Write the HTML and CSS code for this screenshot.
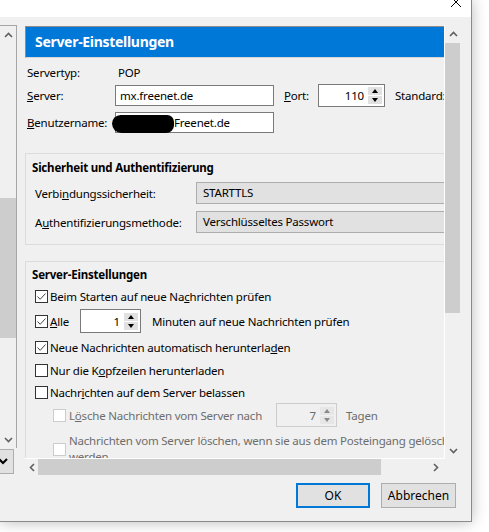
FILE: index.html
```html
<!DOCTYPE html>
<html lang="de">
<head>
    <meta charset="UTF-8">
    <meta name="viewport" content="width=device-width, initial-scale=1.0">
    <title>Konten-Einstellungen</title>
    <link rel="stylesheet" href="styles.css">
</head>
<body>
    <div class="window">
        <!-- Titelleiste, nur der untere Rand ist sichtbar -->
        <div class="titlebar">
            <svg class="close" width="12" height="8" viewBox="0 0 12 8">
                <path d="M1 -3 L11 7 M11 -3 L1 7" stroke="#000" stroke-width="1" fill="none"/>
            </svg>
        </div>

        <div class="dialog">
            <div class="main">
                <!-- Kontenliste links (abgeschnitten) -->
                <div class="side">
                    <div class="tree">
                        <div class="sb-btn"><svg width="9" height="6" viewBox="0 0 9 6"><polyline points="1,5 4.5,1.5 8,5" class="chev"/></svg></div>
                        <div class="tree-thumb"></div>
                        <div class="sb-fill"></div>
                        <div class="sb-btn"><svg width="9" height="6" viewBox="0 0 9 6"><polyline points="1,1 4.5,4.5 8,1" class="chev"/></svg></div>
                    </div>
                    <div class="side-btn">
                        <svg width="14" height="23" viewBox="0 0 14 23"><polyline points="-1,9 3,13 7,9" fill="none" stroke="#000" stroke-width="2"/></svg>
                    </div>
                </div>

                <!-- Einstellungsseite mit Bildlaufleisten -->
                <div class="pane">
                    <div class="viewport">
                        <div class="content">
                            <div class="page-title">Server-Einstellungen</div>

                            <div class="form-row row-type">
                                <span class="lbl">Servertyp:</span>
                                <span class="val">POP</span>
                            </div>
                            <div class="form-row row-server">
                                <span class="lbl"><u>S</u>erver:</span>
                                <div class="field">mx.freenet.de</div>
                                <span class="port-lbl"><u>P</u>ort:</span>
                                <div class="spin spin-port">
                                    <span class="spin-val">110</span>
                                    <div class="spin-btns">
                                        <div class="spin-up"></div>
                                        <div class="spin-down"></div>
                                    </div>
                                </div>
                                <span class="std">Standard: 110</span>
                            </div>
                            <div class="form-row row-user">
                                <span class="lbl"><u>B</u>enutzername:</span>
                                <div class="field"><span class="blob"></span>Freenet.de</div>
                            </div>

                            <div class="group group-security">
                                <div class="group-title">Sicherheit und Authentifizierung</div>
                                <div class="group-row">
                                    <span class="lbl2">Verbi<u>n</u>dungssicherheit:</span>
                                    <div class="combo">STARTTLS</div>
                                </div>
                                <div class="group-row second">
                                    <span class="lbl2">A<u>u</u>thentifizierungsmethode:</span>
                                    <div class="combo">Verschlüsseltes Passwort</div>
                                </div>
                            </div>

                            <div class="group group-server">
                                <div class="group-title">Server-Einstellungen</div>
                                <div class="check-row r1">
                                    <span class="cb checked"><svg width="11" height="11" viewBox="0 0 11 11"><polyline points="1.5,5.5 4.2,8.3 9.5,2.5" class="tick"/></svg></span>
                                    <span>Beim Starten auf neue Na<u>c</u>hrichten prüfen</span>
                                </div>
                                <div class="check-row r2">
                                    <span class="cb checked"><svg width="11" height="11" viewBox="0 0 11 11"><polyline points="1.5,5.5 4.2,8.3 9.5,2.5" class="tick"/></svg></span>
                                    <span class="alle"><u>A</u>lle</span>
                                    <div class="spin spin-small">
                                        <span class="spin-val">1</span>
                                        <div class="spin-btns">
                                            <div class="spin-up"></div>
                                            <div class="spin-down"></div>
                                        </div>
                                    </div>
                                    <span class="minuten">Minuten auf neue Nachrichten prüfen</span>
                                </div>
                                <div class="check-row r3">
                                    <span class="cb checked"><svg width="11" height="11" viewBox="0 0 11 11"><polyline points="1.5,5.5 4.2,8.3 9.5,2.5" class="tick"/></svg></span>
                                    <span>Neue Nachrichten automatisch herunterla<u>d</u>en</span>
                                </div>
                                <div class="check-row r4">
                                    <span class="cb"></span>
                                    <span>Nur die K<u>o</u>pfzeilen herunterladen</span>
                                </div>
                                <div class="check-row r5">
                                    <span class="cb"></span>
                                    <span>Nachr<u>i</u>chten auf dem Server belassen</span>
                                </div>
                                <div class="check-row r6 sub disabled">
                                    <span class="cb"></span>
                                    <span class="loesche">L<u>ö</u>sche Nachrichten vom Server nach</span>
                                    <div class="spin spin-small">
                                        <span class="spin-val">7</span>
                                        <div class="spin-btns">
                                            <div class="spin-up"></div>
                                            <div class="spin-down"></div>
                                        </div>
                                    </div>
                                    <span class="tagen">Tagen</span>
                                </div>
                                <div class="check-row r7 sub disabled">
                                    <span class="cb"></span>
                                    <span class="wrap">Nachrichten vom Server löschen, wenn sie aus dem Posteingang gelöscht<br>werden</span>
                                </div>
                            </div>
                        </div>
                    </div>

                    <div class="vscroll">
                        <div class="sb-btn"><svg width="9" height="6" viewBox="0 0 9 6"><polyline points="1,5 4.5,1.5 8,5" class="chev"/></svg></div>
                        <div class="v-thumb"></div>
                        <div class="sb-fill"></div>
                        <div class="sb-btn"><svg width="9" height="6" viewBox="0 0 9 6"><polyline points="1,1 4.5,4.5 8,1" class="chev"/></svg></div>
                    </div>
                    <div class="hscroll">
                        <div class="hb-btn left"><svg width="6" height="9" viewBox="0 0 6 9"><polyline points="5,1 1.5,4.5 5,8" class="chev"/></svg></div>
                        <div class="h-thumb"></div>
                        <div class="sb-fill"></div>
                        <div class="hb-btn right"><svg width="6" height="9" viewBox="0 0 6 9"><polyline points="1,1 4.5,4.5 1,8" class="chev"/></svg></div>
                    </div>
                    <div class="corner"></div>
                </div>
            </div>

            <div class="buttons">
                <button class="btn default">OK</button>
                <button class="btn">Abbrechen</button>
            </div>
        </div>
    </div>
</body>
</html>
```

FILE: styles.css
```css
/* Grundlayout */
body {
    margin: 0;
    width: 489px;
    height: 532px;
    overflow: hidden;
    background-color: #fff;
    color: #000;
    font-family: "Noto Sans", sans-serif;
    font-size: 11.5px;
    letter-spacing: -0.2px;
}

.window {
    width: 471px;
    height: 521px;
    border-right: 1px solid #8a8a8a;
    border-bottom: 1px solid #8a8a8a;
    background-color: #f0f0f0;
    box-shadow: 0 0 14px rgba(0, 0, 0, 0.28);
    display: flex;
    flex-direction: column;
}

.titlebar {
    height: 17px;
    background-color: #fff;
    display: flex;
    justify-content: flex-end;
    align-items: flex-start;
    overflow: hidden;
}

.close {
    margin-right: 9px;
}

.dialog {
    flex: 1;
    display: flex;
    flex-direction: column;
    padding: 8px 10px 0 0;
}

.main {
    display: flex;
    height: 450px;
}

/* Linke Kontenliste */
.side {
    width: 17px;
    margin-right: 8px;
    display: flex;
    flex-direction: column;
}

.tree {
    height: 423px;
    box-sizing: border-box;
    border-top: 1px solid #a6a6a6;
    border-right: 1px solid #a6a6a6;
    display: flex;
    flex-direction: column;
}

.tree-thumb {
    margin-top: 155px;
    height: 140px;
    background-color: #cdcdcd;
}

.side-btn {
    margin-top: 1px;
    width: 14px;
    height: 25px;
    box-sizing: border-box;
    background-color: #e1e1e1;
    border: 1px solid #adadad;
    border-left: none;
    overflow: hidden;
}

/* Bildlaufleisten */
.sb-btn {
    height: 17px;
    display: flex;
    align-items: center;
    justify-content: center;
    flex: none;
}

.sb-fill {
    flex: 1;
}

.chev {
    fill: none;
    stroke: #606060;
    stroke-width: 1.6;
}

.pane {
    display: grid;
    grid-template-columns: 420px 16px;
    grid-template-rows: 434px 16px;
}

.viewport {
    overflow: hidden;
    box-sizing: border-box;
    border-right: 1px solid #fff;
    border-bottom: 1px solid #fff;
}

.vscroll {
    display: flex;
    flex-direction: column;
}

.v-thumb {
    margin-top: 1px;
    height: 270px;
    margin-right: 1px;
    background-color: #cdcdcd;
}

.hscroll {
    display: flex;
    align-items: stretch;
}

.hb-btn {
    display: flex;
    align-items: center;
    justify-content: center;
}

.hb-btn.left {
    width: 13px;
}

.hb-btn.right {
    width: 19px;
}

.h-thumb {
    width: 343px;
    background-color: #cdcdcd;
}

/* Inhalt der Seite */
.content {
    width: 600px;
    padding-top: 1px;
}

.page-title {
    height: 30px;
    line-height: 30px;
    padding-left: 9px;
    background-color: #0078d7;
    border-top: 1px solid #8c8c8c;
    border-left: 1px solid #8c8c8c;
    border-bottom: 1px solid #d5d5d5;
    color: #fff;
    font-size: 14px;
    letter-spacing: -0.3px;
    font-weight: bold;
}

.form-row {
    display: flex;
    align-items: center;
    padding-left: 2px;
    white-space: nowrap;
}

.row-type {
    height: 20px;
    margin-top: 4px;
}

.row-type .val {
    margin-left: 3px;
}

.row-server {
    height: 23px;
    margin-top: 2px;
}

.row-user {
    height: 23px;
    margin-top: 4px;
}

.lbl {
    width: 88px;
    flex: none;
}

.field {
    width: 159px;
    height: 21px;
    box-sizing: border-box;
    border: 1px solid #7a7a7a;
    background-color: #fff;
    padding-left: 4px;
    line-height: 19px;
    flex: none;
}

.blob {
    display: inline-block;
    vertical-align: top;
    width: 62px;
    height: 18px;
    margin-left: -8px;
    margin-top: 2px;
    background-color: #000;
    border-radius: 10px 8px 9px 11px;
}

.port-lbl {
    margin-left: 10px;
    width: 34px;
}

.spin {
    height: 23px;
    box-sizing: border-box;
    border: 1px solid #7a7a7a;
    background-color: #fff;
    display: flex;
    align-items: center;
    justify-content: flex-end;
    flex: none;
}

.spin-port {
    width: 67px;
}

.spin-small {
    width: 61px;
    height: 24px;
}

.spin-val {
    margin-right: 4px;
}

.spin-btns {
    width: 14px;
    height: 17px;
    margin-right: 2px;
    display: flex;
    flex-direction: column;
    justify-content: space-between;
}

.spin-up, .spin-down {
    height: 8px;
    background-color: #e1e1e1;
    position: relative;
}

.spin-up::after, .spin-down::after {
    content: "";
    position: absolute;
    left: 4px;
    border-left: 3px solid transparent;
    border-right: 3px solid transparent;
}

.spin-up::after {
    top: 2px;
    border-bottom: 4px solid #000;
}

.spin-down::after {
    top: 2px;
    border-top: 4px solid #000;
}

.std {
    margin-left: 10px;
}

/* Gruppen */
.group {
    border: 1px solid #dcdcdc;
    padding-left: 6px;
    white-space: nowrap;
}

.group-security {
    margin-top: 19px;
    padding-top: 6px;
    padding-bottom: 11px;
}

.group-server {
    margin-top: 16px;
    padding-top: 5px;
    padding-bottom: 20px;
}

.group-title {
    font-weight: bold;
    line-height: 16px;
}

.group-row {
    display: flex;
    align-items: center;
    height: 22px;
    padding-left: 3px;
    margin-top: 6px;
}

.group-row.second {
    margin-top: 7px;
}

.lbl2 {
    width: 161px;
    flex: none;
}

.combo {
    width: 320px;
    height: 22px;
    box-sizing: border-box;
    border: 1px solid #adadad;
    background-color: #e1e1e1;
    padding-left: 6px;
    line-height: 20px;
}

.check-row {
    display: flex;
    align-items: center;
    padding-left: 3px;
    height: 22px;
}

.cb {
    width: 13px;
    height: 13px;
    box-sizing: border-box;
    border: 1px solid #333;
    background-color: #fff;
    margin-right: 2px;
    flex: none;
    display: flex;
    align-items: center;
    justify-content: center;
}

.tick {
    fill: none;
    stroke: #444;
    stroke-width: 1;
}

.r1 { margin-top: 2px; }
.r2 { margin-top: 2px; height: 24px; }
.r3 { margin-top: 3px; }
.r4 { margin-top: 1px; }
.r6 { height: 24px; }
.r7 { margin-top: 6px; height: auto; }

.alle {
    width: 30px;
}

.minuten {
    margin-left: 11px;
}

.sub {
    padding-left: 21px;
}

.sub .cb {
    margin-right: 3px;
}

.disabled {
    color: #6d6d6d;
}

.disabled .cb {
    border-color: #cccccc;
}

.disabled .spin {
    border-color: #cccccc;
    background-color: #f0f0f0;
}

.disabled .spin-up, .disabled .spin-down {
    background-color: #e6e6e6;
}

.disabled .spin-up::after {
    border-bottom-color: #8a8a8a;
}

.disabled .spin-down::after {
    border-top-color: #8a8a8a;
}

.loesche {
    width: 207px;
}

.tagen {
    margin-left: 9px;
}

.wrap {
    line-height: 16px;
}

/* Schaltflächen unten */
.buttons {
    display: flex;
    justify-content: flex-end;
    gap: 11px;
    margin-top: 8px;
    padding-right: 5px;
}

.btn {
    width: 75px;
    height: 25px;
    padding: 0;
    background-color: #e1e1e1;
    border: 1px solid #adadad;
    font-family: inherit;
    font-size: 12px;
    color: #000;
}

.btn.default {
    width: 74px;
    border: 2px solid #0078d7;
}
```
